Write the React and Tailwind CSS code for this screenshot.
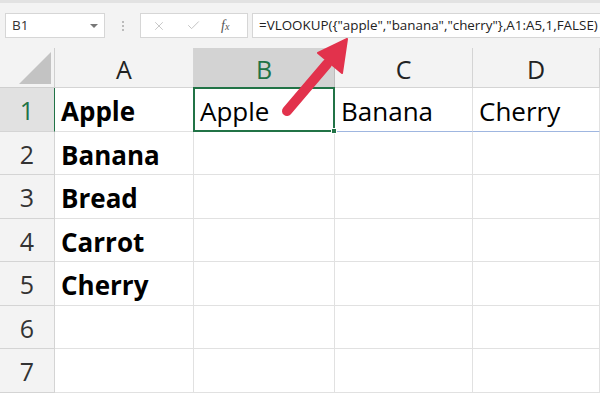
import { X, Check } from 'lucide-react';

const FONT = "font-['Open_Sans',_'Noto_Sans',_sans-serif]";
const FORMULA = '=VLOOKUP({"apple","banana","cherry"},A1:A5,1,FALSE)';

const ROWS = [
  { n: 1, a: 'Apple', b: 'Apple', c: 'Banana', d: 'Cherry' },
  { n: 2, a: 'Banana' },
  { n: 3, a: 'Bread' },
  { n: 4, a: 'Carrot' },
  { n: 5, a: 'Cherry' },
  { n: 6 },
  { n: 7 },
];

function FormulaBar() {
  return (
    <div className="h-[48px] bg-[#f3f3f3] border-t-[3px] border-[#e2e2e2] flex items-start pt-[10px] pl-[5px] gap-[4px]">
      <div className="w-[100px] h-[25px] bg-white border border-[#d6d6d6] flex items-center justify-between px-[6px]">
        <span className="text-[13.5px] text-[#333]">B1</span>
        <span className="w-0 h-0 border-l-[4px] border-r-[4px] border-t-[4px] border-l-transparent border-r-transparent border-t-[#777]" />
      </div>
      <div className="w-[27px] h-[25px] flex flex-col items-center justify-center gap-[2px]">
        <span className="w-[2px] h-[2px] bg-[#bbb]" />
        <span className="w-[2px] h-[2px] bg-[#bbb]" />
        <span className="w-[2px] h-[2px] bg-[#bbb]" />
      </div>
      <div className="w-[108px] h-[25px] bg-white border border-[#d6d6d6] flex items-center pl-[11px] gap-[20px]">
        <X size={14} strokeWidth={1.4} className="text-[#bcbcbc]" />
        <Check size={15} strokeWidth={1.4} className="text-[#bcbcbc]" />
        <span className="font-['Liberation_Serif',_serif] italic text-[14px] text-[#555] leading-none">
          f<span className="text-[10px]">x</span>
        </span>
      </div>
      <div className="flex-1 h-[25px] bg-white border border-[#d6d6d6] border-r-0 flex items-center pl-[6px] overflow-hidden whitespace-nowrap">
        <span className="text-[13.4px] text-[#222]">{FORMULA}</span>
      </div>
    </div>
  );
}

function Corner() {
  return (
    <div className="bg-[#f3f3f3] border-r border-b border-[#cfcfcf] flex items-end justify-end pr-[3px] pb-[3px]">
      <svg width="32" height="32" viewBox="0 0 32 32">
        <polygon points="0,32 32,32 32,0" fill="#c3c3c3" />
      </svg>
    </div>
  );
}

function ColHeader({ label, active }) {
  return (
    <div
      className={`flex items-center justify-center pt-[4px] text-[25px] border-r border-b ${
        active
          ? 'bg-[#d3d3d3] text-[#217346] border-[#bdbdbd]'
          : 'bg-[#f3f3f3] text-[#222] border-[#d4d4d4]'
      }`}
    >
      {label}
    </div>
  );
}

function RowHeader({ n }) {
  const active = n === 1;
  return (
    <div
      className={`flex items-center justify-center pt-[3px] text-[25px] border-b border-r ${
        active
          ? 'bg-[#e1e1e1] text-[#217346] border-r-[#217346] border-b-[#d4d4d4]'
          : 'bg-[#f3f3f3] text-[#333] border-[#d4d4d4]'
      }`}
    >
      {n}
    </div>
  );
}

function Cell({ children, bold, extra = '' }) {
  return (
    <div
      className={`flex items-center pl-[6px] pt-[5px] text-[26px] text-black border-r border-b border-[#e1e1e1] whitespace-nowrap overflow-visible ${
        bold ? 'font-bold' : ''
      } ${extra}`}
    >
      {children}
    </div>
  );
}

function Arrow() {
  return (
    <svg className="absolute left-0 top-0 pointer-events-none" width="600" height="400">
      <line x1="287" y1="111" x2="327" y2="64" stroke="#e2324c" strokeWidth="10" strokeLinecap="round" />
      <polygon points="347,39 318,53 342,73" fill="#e2324c" stroke="#e2324c" strokeWidth="2" strokeLinejoin="round" />
    </svg>
  );
}

export default function App() {
  return (
    <div className={`relative w-[600px] h-[400px] overflow-hidden bg-white ${FONT}`}>
      <FormulaBar />
      <div className="grid grid-cols-[55px_139px_141px_138px_1fr] grid-rows-[40px_repeat(7,43.5px)]">
        <Corner />
        <ColHeader label="A" />
        <ColHeader label="B" active />
        <ColHeader label="C" />
        <ColHeader label="D" />
        {ROWS.map((r) => (
          <div key={r.n} className="contents">
            <RowHeader n={r.n} />
            <Cell bold>{r.a}</Cell>
            {r.n === 1 ? (
              <div className="relative flex items-center pl-[5px] pt-[5px] text-[26px] text-black border-2 border-[#217346] -ml-[1px] -mt-[1px]">
                {r.b}
                <span className="absolute -right-[4px] -bottom-[4px] w-[6px] h-[6px] bg-[#217346] border border-white" />
              </div>
            ) : (
              <Cell />
            )}
            <Cell extra={r.n === 1 ? 'border-b-[#9fb6e0]' : ''}>{r.c}</Cell>
            <Cell extra={r.n === 1 ? 'border-b-[#9fb6e0]' : ''}>{r.d}</Cell>
          </div>
        ))}
      </div>
      <Arrow />
    </div>
  );
}
